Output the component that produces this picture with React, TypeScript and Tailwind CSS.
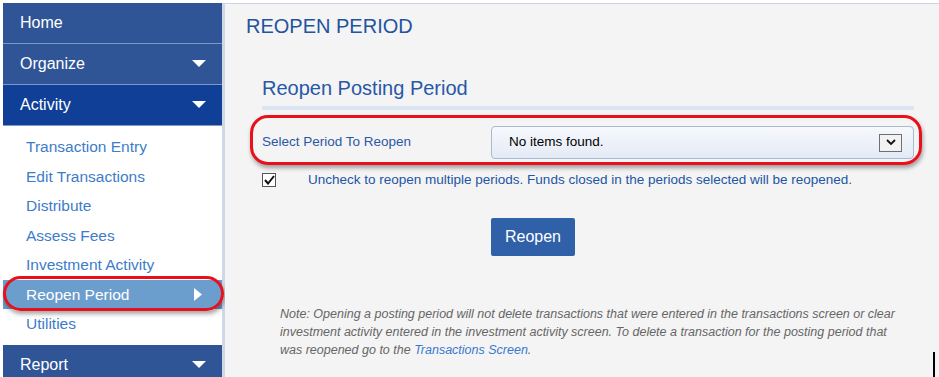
import { ReactNode } from "react";

const font = { fontFamily: '"Liberation Sans", Arial, sans-serif' };

const DownArrow = () => (
    <svg width="14" height="8" viewBox="0 0 14 8" className="ml-auto">
        <polygon points="0,0 14,0 7,7" fill="#ffffff" />
    </svg>
);

const RightArrow = () => (
    <svg width="8" height="13" viewBox="0 0 8 13" className="ml-auto">
        <polygon points="0,0 8,6.5 0,13" fill="#ffffff" />
    </svg>
);

const MenuHeader = ({ label, active, arrow }: { label: string; active?: boolean; arrow?: boolean }) => (
    <div
        className={`shrink-0 flex items-center h-[41px] pl-[17px] pr-[16px] text-white text-[16px] border-b border-[#7f98c6] ${
            active ? "bg-[#0f3f96]" : "bg-[#2f5597]"
        }`}
    >
        <span>{label}</span>
        {arrow && <DownArrow />}
    </div>
);

const subItems = [
    "Transaction Entry",
    "Edit Transactions",
    "Distribute",
    "Assess Fees",
    "Investment Activity",
    "Reopen Period",
    "Utilities",
];

const RedRing = ({ className, children }: { className: string; children?: ReactNode }) => (
    <div
        className={`absolute border-[3px] border-[#e8101a] shadow-[1px_3px_4px_rgba(0,0,0,0.35)] pointer-events-none ${className}`}
    >
        {children}
    </div>
);

const App = () => {
    return (
        <div className="w-[939px] h-[377px] overflow-hidden bg-white flex pt-[3px] pl-[3px]" style={font}>
            {/* sidebar */}
            <div className="w-[222px] shrink-0 flex flex-col bg-white border-r-[3px] border-[#cfd8e6]">
                <MenuHeader label="Home" />
                <MenuHeader label="Organize" arrow />
                <MenuHeader label="Activity" active arrow />
                <div className="shrink-0 relative flex flex-col pt-[6px] pb-[6px]">
                    {subItems.map((item) => {
                        const selected = item === "Reopen Period";
                        return (
                            <div
                                key={item}
                                className={`flex items-center h-[29.5px] pl-[23px] pr-[20px] text-[15.5px] ${
                                    selected ? "bg-[#6b9dcd] text-white" : "text-[#3d7cc9]"
                                }`}
                            >
                                <span>{item}</span>
                                {selected && <RightArrow />}
                            </div>
                        );
                    })}
                    <RedRing className="left-0 right-[-2px] top-[150px] h-[35px] rounded-full" />
                </div>
                <MenuHeader label="Report" arrow />
            </div>

            {/* main */}
            <div className="flex-1 bg-[#f4f4f4] border-t border-[#cbd4e3] relative">
                <div className="pl-[21px] pt-[10px] text-[20px] text-[#23539f] leading-[24px]">REOPEN PERIOD</div>

                <div className="ml-[37px] mr-[25px] mt-[38px]">
                    <div className="text-[20px] text-[#2858a7] leading-[24px]">Reopen Posting Period</div>
                    <div className="mt-[6px] h-[4px] bg-[#dae4f2]" />

                    <div className="relative flex items-center mt-[16px] h-[33px]">
                        <div className="w-[229px] text-[13.5px] text-[#2b58a6]">Select Period To Reopen</div>
                        <div className="flex-1 h-[33px] flex items-center pl-[17px] pr-[11px] rounded-[4px] border border-[#a9bad4] bg-gradient-to-b from-[#f6f8fc] to-[#e4ebf6] text-[13.5px] text-black">
                            <span>No items found.</span>
                            <div className="ml-auto w-[23px] h-[18px] border border-[#6f6f6f] bg-[#f2f2f2] flex items-center justify-center">
                                <svg width="10" height="7" viewBox="0 0 10 7">
                                    <polyline points="1,1 5,5 9,1" fill="none" stroke="#111" strokeWidth="1.8" />
                                </svg>
                            </div>
                        </div>
                        <RedRing className="left-[-12px] right-[-8px] top-[-11px] bottom-[-6px] rounded-[18px]" />
                    </div>

                    <div className="flex items-center mt-[11px]">
                        <div className="w-[14px] h-[14px] border border-[#555] bg-white flex items-center justify-center">
                            <svg width="11" height="10" viewBox="0 0 11 10">
                                <polyline points="1,5 4,8.5 10,1" fill="none" stroke="#111" strokeWidth="2" />
                            </svg>
                        </div>
                        <span className="ml-[32px] text-[13.5px] text-[#2255a4]">
                            Uncheck to reopen multiple periods. Funds closed in the periods selected will be reopened.
                        </span>
                    </div>

                    <div className="mt-[28px] ml-[229px]">
                        <button className="w-[84px] h-[38px] bg-[#3060a8] text-white text-[16px] rounded-[2px]">
                            Reopen
                        </button>
                    </div>

                    <div className="mt-[49px] ml-[18px] w-[630px] text-[12.5px] italic text-[#666666] leading-[18px]">
                        Note: Opening a posting period will not delete transactions that were entered in the transactions
                        screen or clear investment activity entered in the investment activity screen. To delete a
                        transaction for the posting period that was reopened go to the{" "}
                        <span className="text-[#3a78d0]">Transactions Screen</span>.
                    </div>
                </div>
                <div className="absolute right-[4px] bottom-0 w-[2px] h-[25px] bg-black" />
            </div>
        </div>
    );
};

export default App;
